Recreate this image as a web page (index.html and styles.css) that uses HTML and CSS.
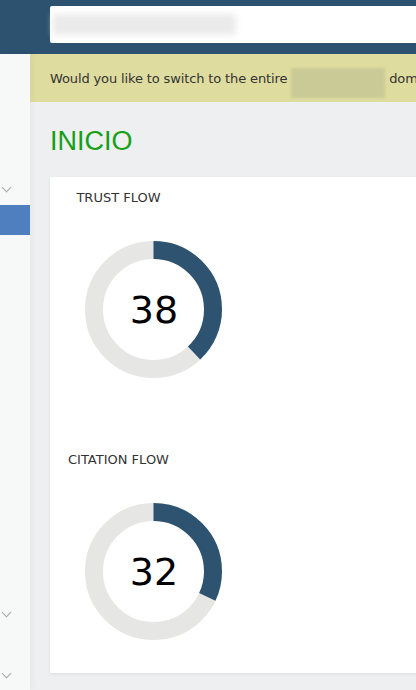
FILE: index.html
```html
<!DOCTYPE html>
<html lang="en">
<head>
<meta charset="utf-8">
<title>Inicio</title>
<link rel="stylesheet" href="styles.css">
</head>
<body>
<header class="topbar">
  <div class="search">
    <div class="search-blur"></div>
  </div>
</header>
<div class="layout">
  <nav class="sidebar">
    <div class="nav-item nav-first"><span class="chev"></span></div>
    <div class="nav-item nav-active"></div>
    <div class="nav-item nav-low"><span class="chev"></span></div>
    <div class="nav-item nav-last"><span class="chev"></span></div>
  </nav>
  <main class="main">
    <div class="banner">
      <span class="banner-text">Would you like to switch to the entire</span>
      <span class="banner-blur"></span>
      <span class="banner-text banner-tail">domain?</span>
    </div>
    <div class="content">
      <h1 class="page-title">INICIO</h1>
      <section class="card">
        <div class="metric">
          <div class="metric-title">TRUST FLOW</div>
          <svg class="donut" width="137" height="137" viewBox="0 0 137 137">
            <circle cx="68.5" cy="68.5" r="59.5" fill="none" stroke="#e6e6e5" stroke-width="18"/>
            <circle cx="68.5" cy="68.5" r="59.5" fill="none" stroke="#2d5370" stroke-width="18" stroke-dasharray="142.06 373.85" transform="rotate(-90 68.5 68.5)"/>
            <text x="69" y="82" text-anchor="middle" class="donut-value">38</text>
          </svg>
        </div>
        <div class="metric metric-second">
          <div class="metric-title">CITATION FLOW</div>
          <svg class="donut" width="137" height="137" viewBox="0 0 137 137">
            <circle cx="68.5" cy="68.5" r="59.5" fill="none" stroke="#e6e6e5" stroke-width="18"/>
            <circle cx="68.5" cy="68.5" r="59.5" fill="none" stroke="#2d5370" stroke-width="18" stroke-dasharray="119.63 373.85" transform="rotate(-90 68.5 68.5)"/>
            <text x="69" y="82" text-anchor="middle" class="donut-value">32</text>
          </svg>
        </div>
      </section>
    </div>
  </main>
</div>
</body>
</html>
```
FILE: styles.css
```css
html, body {
  margin: 0;
  padding: 0;
}
body {
  width: 416px;
  height: 690px;
  overflow: hidden;
  background: #eeeff1;
  font-family: "DejaVu Sans", Verdana, sans-serif;
}
.topbar {
  height: 54px;
  background: #2d5270;
  padding: 6px 0 0 50px;
  box-sizing: border-box;
}
.search {
  height: 37px;
  background: #ffffff;
  border-radius: 2px 0 0 2px;
  padding: 8px 0 0 3px;
  box-sizing: border-box;
}
.search-blur {
  width: 183px;
  height: 21px;
  background: #ebebeb;
  filter: blur(3px);
}
.layout {
  display: flex;
  height: 636px;
}
.sidebar {
  width: 30px;
  flex: none;
  background: #f7f8f8;
  box-shadow: 2px 0 6px rgba(0, 0, 0, 0.04);
  display: flex;
  flex-direction: column;
  position: relative;
  z-index: 1;
}
.nav-item {
  height: 30px;
  display: flex;
  align-items: center;
  padding-left: 2px;
}
.nav-first {
  margin-top: 120px;
}
.nav-active {
  margin-top: 1px;
  background: #4f7fbe;
}
.nav-low {
  margin-top: 364px;
}
.nav-last {
  margin-top: 31px;
}
.chev {
  display: block;
  width: 6px;
  height: 6px;
  border-right: 1px solid #a8a8a8;
  border-bottom: 1px solid #a8a8a8;
  transform: translate(1px, -2px) rotate(45deg);
  transform-origin: center;
}
.main {
  flex: 1;
  min-width: 0;
}
.banner {
  height: 48px;
  background: #dfdc9f;
  display: flex;
  align-items: center;
  padding: 0 20px;
  white-space: nowrap;
  gap: 4px;
  overflow: hidden;
}
.banner-text {
  font-size: 13px;
  letter-spacing: -0.13px;
  color: #333333;
}
.banner-tail {
  flex: none;
}
.banner-blur {
  flex: none;
  width: 94px;
  height: 30px;
  margin-top: 10px;
  background: #c9ca95;
  filter: blur(1.5px);
}
.content {
  padding: 0 0 0 20px;
}
.page-title {
  margin: 24px 0 21px 0;
  font-family: "Liberation Sans", Arial, sans-serif;
  font-weight: normal;
  font-size: 27px;
  line-height: 30px;
  color: #16a016;
}
.card {
  width: 420px;
  height: 496px;
  background: #ffffff;
  box-shadow: 0 1px 3px rgba(0, 0, 0, 0.08);
  padding-top: 13px;
  box-sizing: border-box;
}
.metric {
  display: flex;
  flex-direction: column;
}
.metric-second {
  margin-top: 74px;
}
.metric-title {
  width: 137px;
  text-align: center;
  font-size: 13px;
  line-height: 16px;
  color: #333333;
}
.donut {
  display: block;
  margin: 35px 0 0 35px;
}
.donut-value {
  font-family: "DejaVu Sans", Verdana, sans-serif;
  font-size: 38px;
  fill: #000000;
}
```
